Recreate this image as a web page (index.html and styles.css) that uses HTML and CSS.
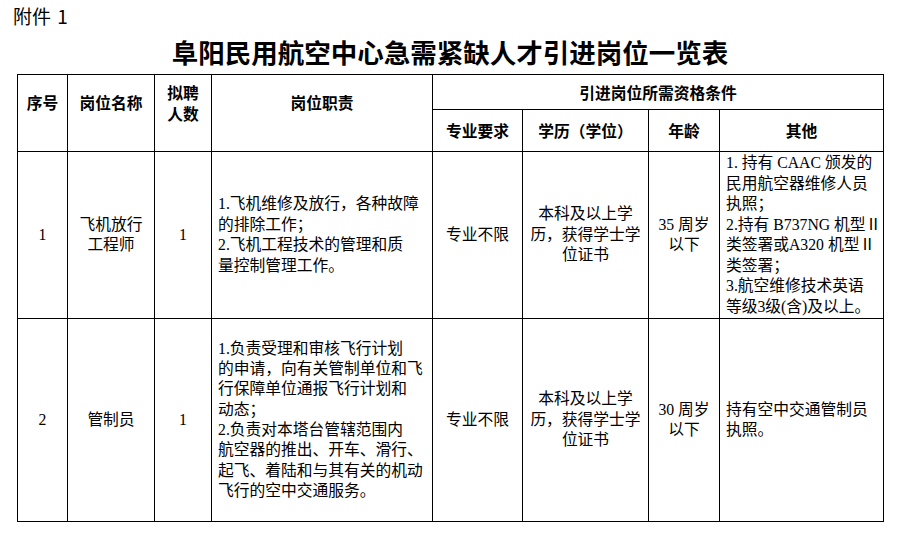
FILE: index.html
```html
<!DOCTYPE html>
<html lang="zh-CN">
<head>
<meta charset="utf-8">
<title>阜阳民用航空中心急需紧缺人才引进岗位一览表</title>
<link rel="stylesheet" href="styles.css">
</head>
<body>
<div class="page">
  <div class="annex">附件 1</div>
  <h1 class="title">阜阳民用航空中心急需紧缺人才引进岗位一览表</h1>
  <table class="grid">
    <colgroup>
      <col class="c1"><col class="c2"><col class="c3"><col class="c4">
      <col class="c5"><col class="c6"><col class="c7"><col class="c8">
    </colgroup>
    <thead>
      <tr class="h1">
        <th rowspan="2" class="span">序号</th>
        <th rowspan="2" class="span">岗位名称</th>
        <th rowspan="2" class="span">拟聘<br>人数</th>
        <th rowspan="2" class="span">岗位职责</th>
        <th colspan="4">引进岗位所需资格条件</th>
      </tr>
      <tr class="h2">
        <th>专业要求</th>
        <th>学历（学位）</th>
        <th>年龄</th>
        <th>其他</th>
      </tr>
    </thead>
    <tbody>
      <tr class="r1">
        <td>1</td>
        <td>飞机放行<br>工程师</td>
        <td>1</td>
        <td class="left">1.飞机维修及放行，各种故障<br>的排除工作；<br>2.飞机工程技术的管理和质<br>量控制管理工作。</td>
        <td>专业不限</td>
        <td>本科及以上学<br>历，获得学士学<br>位证书</td>
        <td>35 周岁<br>以下</td>
        <td class="left">1. 持有 CAAC 颁发的<br>民用航空器维修人员<br>执照；<br>2.持有 B737NG 机型Ⅱ<br>类签署或A320 机型Ⅱ<br>类签署；<br>3.航空维修技术英语<br>等级3级(含)及以上。</td>
      </tr>
      <tr class="r2">
        <td>2</td>
        <td>管制员</td>
        <td>1</td>
        <td class="left">1.负责受理和审核飞行计划<br>的申请，向有关管制单位和飞<br>行保障单位通报飞行计划和<br>动态；<br>2.负责对本塔台管辖范围内<br>航空器的推出、开车、滑行、<br>起飞、着陆和与其有关的机动<br>飞行的空中交通服务。</td>
        <td>专业不限</td>
        <td>本科及以上学<br>历，获得学士学<br>位证书</td>
        <td>30 周岁<br>以下</td>
        <td class="left">持有空中交通管制员<br>执照。</td>
      </tr>
    </tbody>
  </table>
</div>
</body>
</html>
```

FILE: styles.css
```css
html, body {
  margin: 0;
  padding: 0;
  background: #ffffff;
  color: #000000;
}

.page {
  width: 897px;
  padding: 0 0 0 17px;
  box-sizing: border-box;
}

.annex {
  margin: 0 0 0 -4px;
  padding-top: 5px;
  font-family: "Noto Sans CJK SC", "Liberation Sans", sans-serif;
  font-size: 19px;
  line-height: 22px;
  height: 22px;
  word-spacing: 2px;
}

.title {
  margin: 9px 0 6px 0;
  width: 866px;
  text-align: center;
  font-family: "Noto Sans CJK SC", sans-serif;
  font-weight: 700;
  font-size: 26.5px;
  line-height: 32px;
  height: 32px;
}

.grid {
  border-collapse: collapse;
  table-layout: fixed;
  width: 866px;
  font-family: "Liberation Serif", "Noto Sans CJK SC", serif;
  font-size: 15.75px;
  line-height: 20.5px;
}

.c1 { width: 50px; }
.c2 { width: 87px; }
.c3 { width: 57px; }
.c4 { width: 221px; }
.c5 { width: 90px; }
.c6 { width: 126px; }
.c7 { width: 71px; }
.c8 { width: 164px; }

.grid th,
.grid td {
  border: 1px solid #000000;
  padding: 0;
  text-align: center;
  vertical-align: middle;
  white-space: nowrap;
  overflow: hidden;
}

.grid th {
  font-family: "Noto Sans CJK SC", sans-serif;
  font-weight: 700;
  font-size: 15.75px;
  line-height: 21px;
}

.grid th.span {
  padding-bottom: 21px;
}

.h1 { height: 35px; }
.h2 { height: 42px; }
.r1 { height: 167px; }
.r2 { height: 203px; }

.grid td.left {
  text-align: left;
  padding-left: 6px;
}

.r2 td.left {
  line-height: 20.3px;
}
```
